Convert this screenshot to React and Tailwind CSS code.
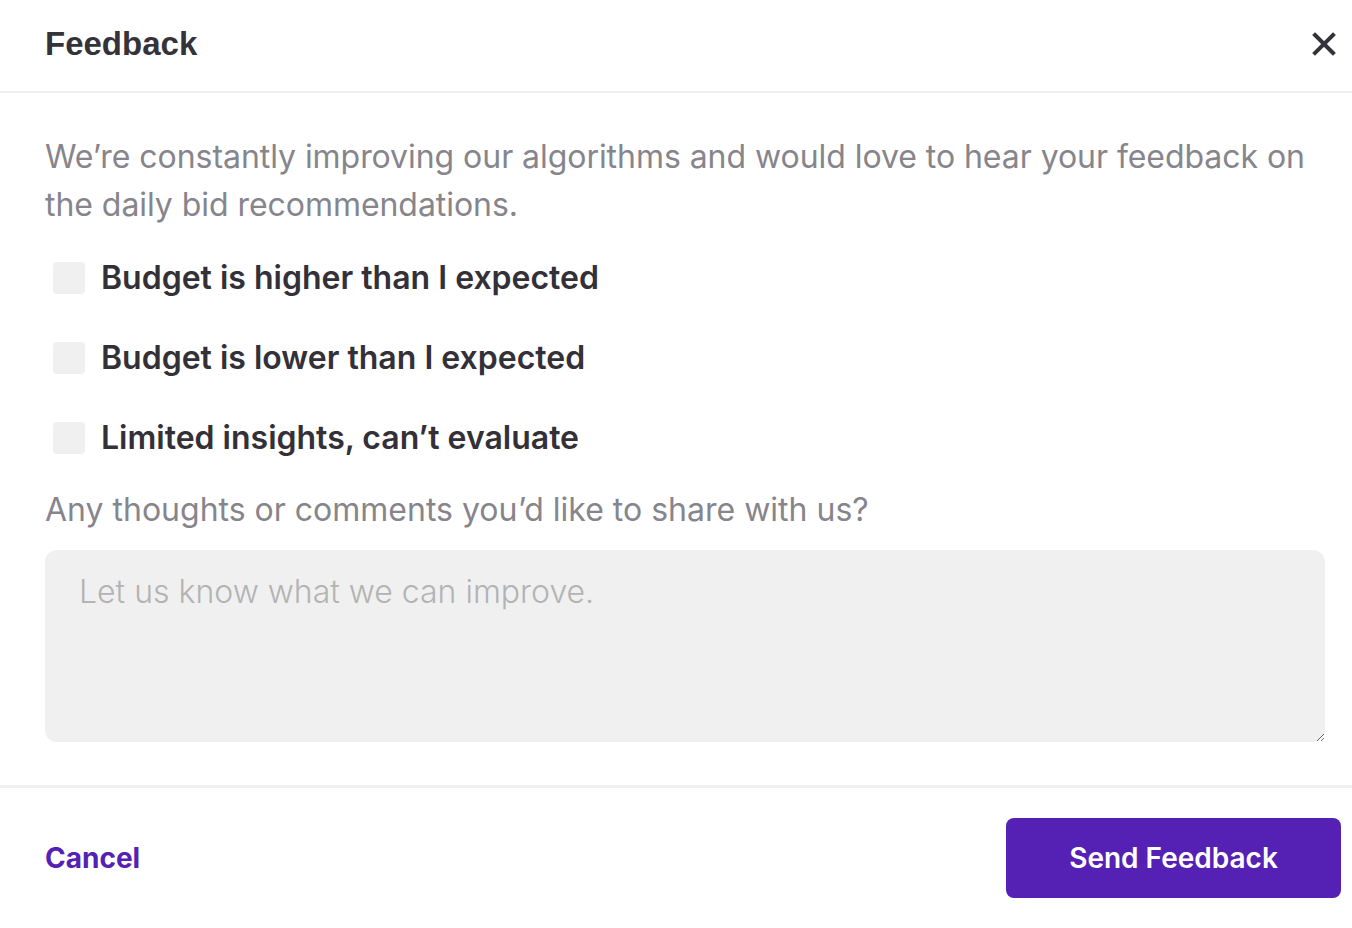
import React, { useState } from 'react';

const options = [
  'Budget is higher than I expected',
  'Budget is lower than I expected',
  'Limited insights, can\u2019t evaluate',
];

export default function App() {
  const [checked, setChecked] = useState([false, false, false]);
  const [comment, setComment] = useState('');

  const toggle = (i) => {
    setChecked((prev) => prev.map((v, idx) => (idx === i ? !v : v)));
  };

  return (
    <div className="w-[1352px] h-[928px] bg-white overflow-hidden font-['Inter',sans-serif] flex flex-col">
      {/* Header */}
      <div className="h-[93px] shrink-0 pl-[45px] pr-[16px] pb-[4px] flex items-center justify-between border-b-2 border-[#efefef]">
        <h1 className="font-['Liberation_Sans',Arial,sans-serif] font-bold text-[33px] text-[#35333a] leading-none">
          Feedback
        </h1>
        <button className="w-[24px] h-[24px] flex items-center justify-center text-[#35333a]">
          <svg width="24" height="24" viewBox="0 0 24 24" fill="none">
            <path d="M3 3L21 21M21 3L3 21" stroke="currentColor" strokeWidth="4" strokeLinecap="square" />
          </svg>
        </button>
      </div>

      {/* Body */}
      <div className="pl-[45px] pr-[27px] pt-[40px] pb-[43px] flex flex-col">
        <p className="text-[32px] leading-[48px] text-[#87858c] tracking-[-0.05px]">
          We’re constantly improving our algorithms and would love to hear your feedback on the daily bid recommendations.
        </p>

        <div className="mt-[25px] flex flex-col gap-[32px]">
          {options.map((label, i) => (
            <label key={label} className="h-[48px] flex items-center gap-[16px] pl-[8px] cursor-pointer">
              <span
                onClick={() => toggle(i)}
                className="w-[32px] h-[32px] rounded-[4px] bg-[#f0f0f0] flex items-center justify-center shrink-0"
              >
                {checked[i] && (
                  <svg width="20" height="20" viewBox="0 0 20 20" fill="none">
                    <path d="M4 10l4 4 8-8" stroke="#5521b5" strokeWidth="3" strokeLinecap="round" strokeLinejoin="round" />
                  </svg>
                )}
              </span>
              <span className="text-[32px] font-semibold text-[#333038] leading-none">{label}</span>
            </label>
          ))}
        </div>

        <p className="mt-[24px] text-[32px] leading-[48px] text-[#87858c]">
          Any thoughts or comments you’d like to share with us?
        </p>

        <textarea
          value={comment}
          onChange={(e) => setComment(e.target.value)}
          placeholder="Let us know what we can improve."
          className="mt-[16px] h-[192px] w-full rounded-[12px] bg-[#f0f0f0] pl-[34px] pr-[20px] pt-[22px] text-[32px] leading-[40px] font-light text-[#333038] placeholder:text-[#b3b3b3] outline-none"
        />
      </div>

      {/* Footer */}
      <div className="border-t-[3px] border-[#f0f0f0] flex-1 pl-[45px] pr-[11px] flex items-center justify-between">
        <button className="text-[28px] font-bold text-[#5521b5]">Cancel</button>
        <button className="w-[335px] h-[80px] rounded-[8px] bg-[#5521b5] text-white text-[28px] font-semibold">
          Send Feedback
        </button>
      </div>
    </div>
  );
}
